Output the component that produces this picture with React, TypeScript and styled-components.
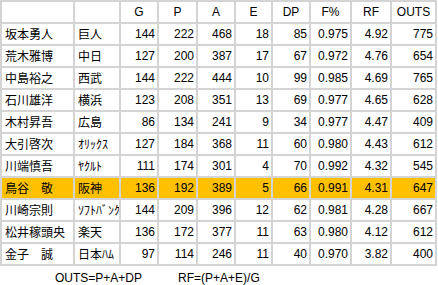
import React from "react";
import styled, { createGlobalStyle } from "styled-components";

const Global = createGlobalStyle`
  html, body { margin: 0; padding: 0; background: #ffffff; }
  body { font-family: "Liberation Sans", Arial, "Noto Sans CJK JP", sans-serif; color: #000; }
`;

const Page = styled.div`
  width: 438px;
  height: 285px;
  display: flex;
  flex-direction: column;
  overflow: hidden;
`;

const Sheet = styled.div`
  display: grid;
  grid-template-columns: 71px 44px 36px 37px 36px 35px 36px 39px 38px 43px;
  grid-auto-rows: 20px;
  gap: 2px;
  padding: 2px;
  background: #d4d4d4;
  width: max-content;
`;

const Cell = styled.div<{ $align: "left" | "center" | "right"; $hl?: boolean; $jp?: boolean }>`
  background: ${(p) => (p.$hl ? "#ffc000" : "#ffffff")};
  text-align: ${(p) => p.$align};
  font-family: ${(p) =>
    p.$jp
      ? `"Noto Sans CJK JP", "Liberation Sans", sans-serif`
      : `"Liberation Sans", Arial, sans-serif`};
  font-size: 12px;
  line-height: 20px;
  padding: ${(p) => (p.$align === "left" ? "0 0 0 3px" : p.$align === "right" ? "0 2px 0 0" : "0")};
  white-space: nowrap;
  overflow: hidden;
  color: #000;
`;

const Notes = styled.div`
  display: flex;
  gap: 36px;
  padding: 4px 0 0 55px;
  font-family: "Liberation Sans", Arial, sans-serif;
  font-size: 12px;
  line-height: 16px;
  color: #000;
`;

const headers = ["", "", "G", "P", "A", "E", "DP", "F%", "RF", "OUTS"];

const rows: (string | number)[][] = [
  ["坂本勇人", "巨人", 144, 222, 468, 18, 85, "0.975", "4.92", 775],
  ["荒木雅博", "中日", 127, 200, 387, 17, 67, "0.972", "4.76", 654],
  ["中島裕之", "西武", 144, 222, 444, 10, 99, "0.985", "4.69", 765],
  ["石川雄洋", "横浜", 123, 208, 351, 13, 69, "0.977", "4.65", 628],
  ["木村昇吾", "広島", 86, 134, 241, 9, 34, "0.977", "4.47", 409],
  ["大引啓次", "ｵﾘｯｸｽ", 127, 184, 368, 11, 60, "0.980", "4.43", 612],
  ["川端慎吾", "ﾔｸﾙﾄ", 111, 174, 301, 4, 70, "0.992", "4.32", 545],
  ["鳥谷　敬", "阪神", 136, 192, 389, 5, 66, "0.991", "4.31", 647],
  ["川崎宗則", "ｿﾌﾄﾊﾞﾝｸ", 144, 209, 396, 12, 62, "0.981", "4.28", 667],
  ["松井稼頭央", "楽天", 136, 172, 377, 11, 63, "0.980", "4.12", 612],
  ["金子　誠", "日本ﾊﾑ", 97, 114, 246, 11, 40, "0.970", "3.82", 400],
];

const HIGHLIGHT = 7;

export default function App() {
  return (
    <Page>
      <Global />
      <Sheet>
        {headers.map((h, i) => (
          <Cell key={`h${i}`} $align="center">
            {h}
          </Cell>
        ))}
        {rows.map((r, ri) =>
          r.map((v, ci) => (
            <Cell
              key={`${ri}-${ci}`}
              $align={ci < 2 ? "left" : "right"}
              $jp={ci < 2}
              $hl={ri === HIGHLIGHT}
            >
              {v}
            </Cell>
          ))
        )}
      </Sheet>
      <Notes>
        <span>OUTS=P+A+DP</span>
        <span>RF=(P+A+E)/G</span>
      </Notes>
    </Page>
  );
}
